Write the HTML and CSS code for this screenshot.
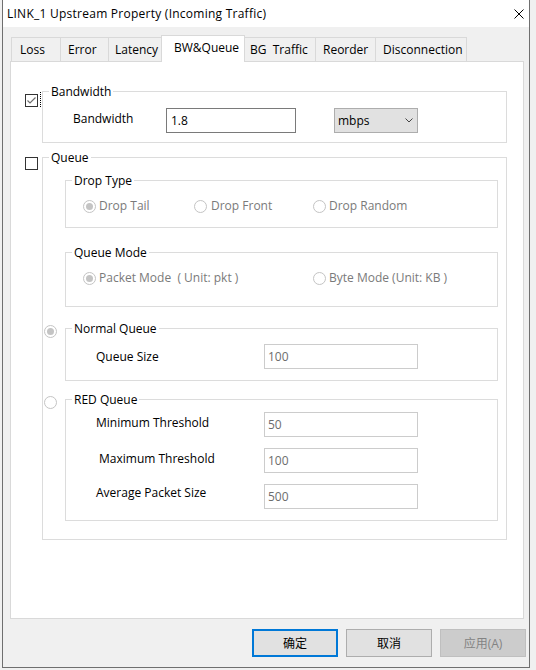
FILE: index.html
```html
<!DOCTYPE html>
<html lang="zh-CN">
<head>
    <meta charset="UTF-8">
    <title>LINK_1 Upstream Property (Incoming Traffic)</title>
    <link rel="stylesheet" href="styles.css">
</head>
<body>
    <div class="dialog">
        <div class="titlebar">
            <span class="title">LINK_1 Upstream Property (Incoming Traffic)</span>
            <svg class="close" width="10" height="10" viewBox="0 0 10 10">
                <path d="M0.5 0.5L9.5 9.5M9.5 0.5L0.5 9.5" stroke="#000" stroke-width="1" fill="none"/>
            </svg>
        </div>

        <div class="dialog-body">
            <div class="tabs">
                <div class="tab">Loss</div>
                <div class="tab">Error</div>
                <div class="tab">Latency</div>
                <div class="tab active">BW&amp;Queue</div>
                <div class="tab">BG&nbsp; Traffic</div>
                <div class="tab">Reorder</div>
                <div class="tab">Disconnection</div>
            </div>

            <div class="page">
                <!-- bandwidth -->
                <div class="section">
                    <div class="side">
                        <span class="checkbox">
                            <svg width="11" height="11" viewBox="0 0 11 11">
                                <path d="M1.5 5.5L4 8L9.5 2.5" stroke="#6e6e6e" stroke-width="1.2" fill="none"/>
                            </svg>
                        </span>
                        <span class="focus"></span>
                    </div>
                    <fieldset class="group group-bw">
                        <legend>Bandwidth</legend>
                        <div class="field">
                            <span class="field-label bw-label raise">Bandwidth</span>
                            <input class="edit bw-edit" type="text" value="1.8">
                            <div class="combo">
                                <span>mbps</span>
                                <svg width="8" height="5" viewBox="0 0 8 5">
                                    <path d="M0.5 0.5L4 4L7.5 0.5" stroke="#444" stroke-width="1" fill="none"/>
                                </svg>
                            </div>
                        </div>
                    </fieldset>
                </div>

                <!-- queue -->
                <div class="section">
                    <div class="side">
                        <span class="checkbox queue-check"></span>
                    </div>
                    <fieldset class="group group-queue">
                        <legend>Queue</legend>

                        <div class="sub-row">
                            <div class="sub-side"></div>
                            <fieldset class="group sub drop-type">
                                <legend>Drop Type</legend>
                                <div class="options">
                                    <label class="option"><span class="radio on"></span>Drop Tail</label>
                                    <label class="option front"><span class="radio"></span>Drop Front</label>
                                    <label class="option"><span class="radio"></span>Drop Random</label>
                                </div>
                            </fieldset>
                        </div>

                        <div class="sub-row mode-row">
                            <div class="sub-side"></div>
                            <fieldset class="group sub queue-mode">
                                <legend>Queue Mode</legend>
                                <div class="options">
                                    <label class="option wide"><span class="radio on"></span>Packet Mode&nbsp; ( Unit: pkt )</label>
                                    <label class="option"><span class="radio"></span>Byte Mode (Unit: KB )</label>
                                </div>
                            </fieldset>
                        </div>

                        <div class="sub-row normal-row">
                            <div class="sub-side"><span class="radio on"></span></div>
                            <fieldset class="group sub normal-queue">
                                <legend>Normal Queue</legend>
                                <div class="field">
                                    <span class="field-label size-label">Queue Size</span>
                                    <input class="edit size-edit" type="text" value="100" disabled>
                                </div>
                            </fieldset>
                        </div>

                        <div class="sub-row red-row">
                            <div class="sub-side"><span class="radio"></span></div>
                            <fieldset class="group sub red-queue">
                                <legend>RED Queue</legend>
                                <div class="field">
                                    <span class="field-label size-label raise">Minimum Threshold</span>
                                    <input class="edit size-edit" type="text" value="50" disabled>
                                </div>
                                <div class="field">
                                    <span class="field-label size-label max-label raise-sm">Maximum Threshold</span>
                                    <input class="edit size-edit" type="text" value="100" disabled>
                                </div>
                                <div class="field">
                                    <span class="field-label size-label raise-lg">Average Packet Size</span>
                                    <input class="edit size-edit" type="text" value="500" disabled>
                                </div>
                            </fieldset>
                        </div>
                    </fieldset>
                </div>
            </div>

            <div class="buttons">
                <button class="btn default">确定</button>
                <button class="btn">取消</button>
                <button class="btn" disabled>应用(A)</button>
            </div>
        </div>
    </div>
</body>
</html>
```

FILE: styles.css
```css
body {
    margin: 0;
    background: #f0f0f0;
    font-family: "Open Sans", "Noto Sans CJK SC", sans-serif;
    font-size: 12px;
    color: #000;
}
.dialog {
    width: 528px;
    height: 668px;
    margin-left: 2px;
    box-sizing: border-box;
    border: 1px solid #6f6f6f;
    border-top: none;
    background: #f0f0f0;
}
.titlebar {
    height: 27px;
    background: #fff;
    display: flex;
    align-items: center;
    justify-content: space-between;
    padding: 0 5px 0 4px;
}
.title {
    letter-spacing: 0.25px;
}
.dialog-body {
    padding: 8px 5px 0 7px;
}

/* tabs */
.tabs {
    display: flex;
    align-items: flex-end;
    padding-left: 1px;
    position: relative;
    z-index: 1;
}
.tab {
    box-sizing: border-box;
    height: 24px;
    padding: 4px 0 0 7px;
    line-height: 16px;
    border: 1px solid #d9d9d9;
    border-bottom: none;
    margin-left: -1px;
    background: #f0f0f0;
    white-space: nowrap;
}
.tab:nth-child(1) { width: 50px; margin-left: 0; padding-left: 8px; }
.tab:nth-child(2) { width: 49px; }
.tab:nth-child(3) { width: 54px; padding-left: 6px; }
.tab:nth-child(4) { width: 84px; }
.tab:nth-child(5) { width: 72px; padding-left: 5px; }
.tab:nth-child(6) { width: 61px; }
.tab:nth-child(7) { width: 92px; }
.tab.active {
    height: 27px;
    margin-bottom: -1px;
    padding-left: 12px;
    background: #fff;
    position: relative;
}

/* page */
.page {
    box-sizing: border-box;
    height: 558px;
    background: #fff;
    border: 1px solid #d9d9d9;
    padding: 21px 16px 0 14px;
}
.section {
    display: flex;
    align-items: flex-start;
}
.section + .section {
    margin-top: 6px;
}
.side {
    width: 17px;
    flex-shrink: 0;
    display: flex;
    align-items: flex-start;
}
.checkbox {
    box-sizing: border-box;
    width: 13px;
    height: 13px;
    margin-top: 11px;
    border: 1px solid #333;
    background: #fff;
    display: flex;
}
.queue-check {
    margin-top: 8px;
}
.focus {
    width: 1px;
    height: 15px;
    margin: 9px 0 0 2px;
    background: repeating-linear-gradient(to bottom, #000 0 1px, transparent 1px 2px);
}

fieldset.group {
    box-sizing: border-box;
    margin: 0;
    padding: 0;
    min-width: 0;
    border: 1px solid #dcdcdc;
}
legend {
    margin-left: 6px;
    padding: 0 2px;
    line-height: 17px;
}
.group-bw {
    width: 465px;
    padding: 8px 0 9px 0 !important;
}
.group-queue {
    width: 465px;
    padding: 6px 8px 18px 0 !important;
}

.field {
    display: flex;
    align-items: center;
    padding-left: 30px;
}
.field + .field {
    margin-top: 11px;
}
.field-label {
    line-height: 16px;
}
.bw-label { width: 93px; }
.size-label { width: 168px; }
.max-label { padding-left: 3px; width: 165px; }
.raise { margin-bottom: 4px; }
.raise-sm { margin-bottom: 3px; }
.raise-lg { margin-bottom: 8px; }

.edit {
    box-sizing: border-box;
    height: 25px;
    margin: 0;
    padding: 0 4px;
    border: 1px solid #7a7a7a;
    background: #fff;
    color: #000;
    font: inherit;
    outline: none;
}
.edit:disabled {
    border-color: #cccccc;
    color: #6d6d6d;
    padding-left: 3px;
}
.bw-edit { width: 130px; }
.size-edit { width: 154px; }

.combo {
    box-sizing: border-box;
    width: 84px;
    height: 25px;
    margin-left: 38px;
    padding: 0 4px 0 3px;
    border: 1px solid #adadad;
    background: #e1e1e1;
    display: flex;
    align-items: center;
    justify-content: space-between;
}

/* sub groups */
.sub-row {
    display: flex;
    align-items: flex-start;
}
.mode-row { margin-top: 16px; }
.normal-row { margin-top: 13px; }
.red-row { margin-top: 10px; }
.sub-side {
    width: 22px;
    flex-shrink: 0;
}
.sub-side .radio {
    margin: 5px 0 0 1px;
}
.sub {
    flex: 1;
}
.drop-type { padding: 9px 0 13px 0 !important; }
.queue-mode { padding: 9px 0 20px 0 !important; }
.normal-queue { padding: 7px 0 11px 0 !important; }
.red-queue { padding: 4px 0 11px 0 !important; }

.options {
    display: grid;
    grid-template-columns: 111px 119px auto;
    padding-left: 17px;
    line-height: 16px;
    color: #7a7a7a;
}
.option {
    display: flex;
    align-items: center;
    gap: 3px;
    white-space: nowrap;
}
.option.front { gap: 4px; }
.option.wide { grid-column: span 2; }

.radio {
    box-sizing: border-box;
    width: 13px;
    height: 13px;
    border: 1px solid #c4c4c4;
    border-radius: 50%;
    background: #fff;
    display: flex;
    align-items: center;
    justify-content: center;
    flex-shrink: 0;
}
.radio.on::after {
    content: "";
    width: 7px;
    height: 7px;
    border-radius: 50%;
    background: #c4c4c4;
}

/* buttons */
.buttons {
    display: flex;
    justify-content: flex-end;
    gap: 8px;
    margin: 10px -2px 0 0;
}
.btn {
    box-sizing: border-box;
    width: 86px;
    height: 28px;
    padding: 0;
    border: 1px solid #adadad;
    background: #e1e1e1;
    color: #000;
    font: inherit;
}
.btn.default {
    border: 2px solid #0078d7;
}
.btn:disabled {
    background: #cccccc;
    border-color: #bfbfbf;
    color: #838383;
}
```
